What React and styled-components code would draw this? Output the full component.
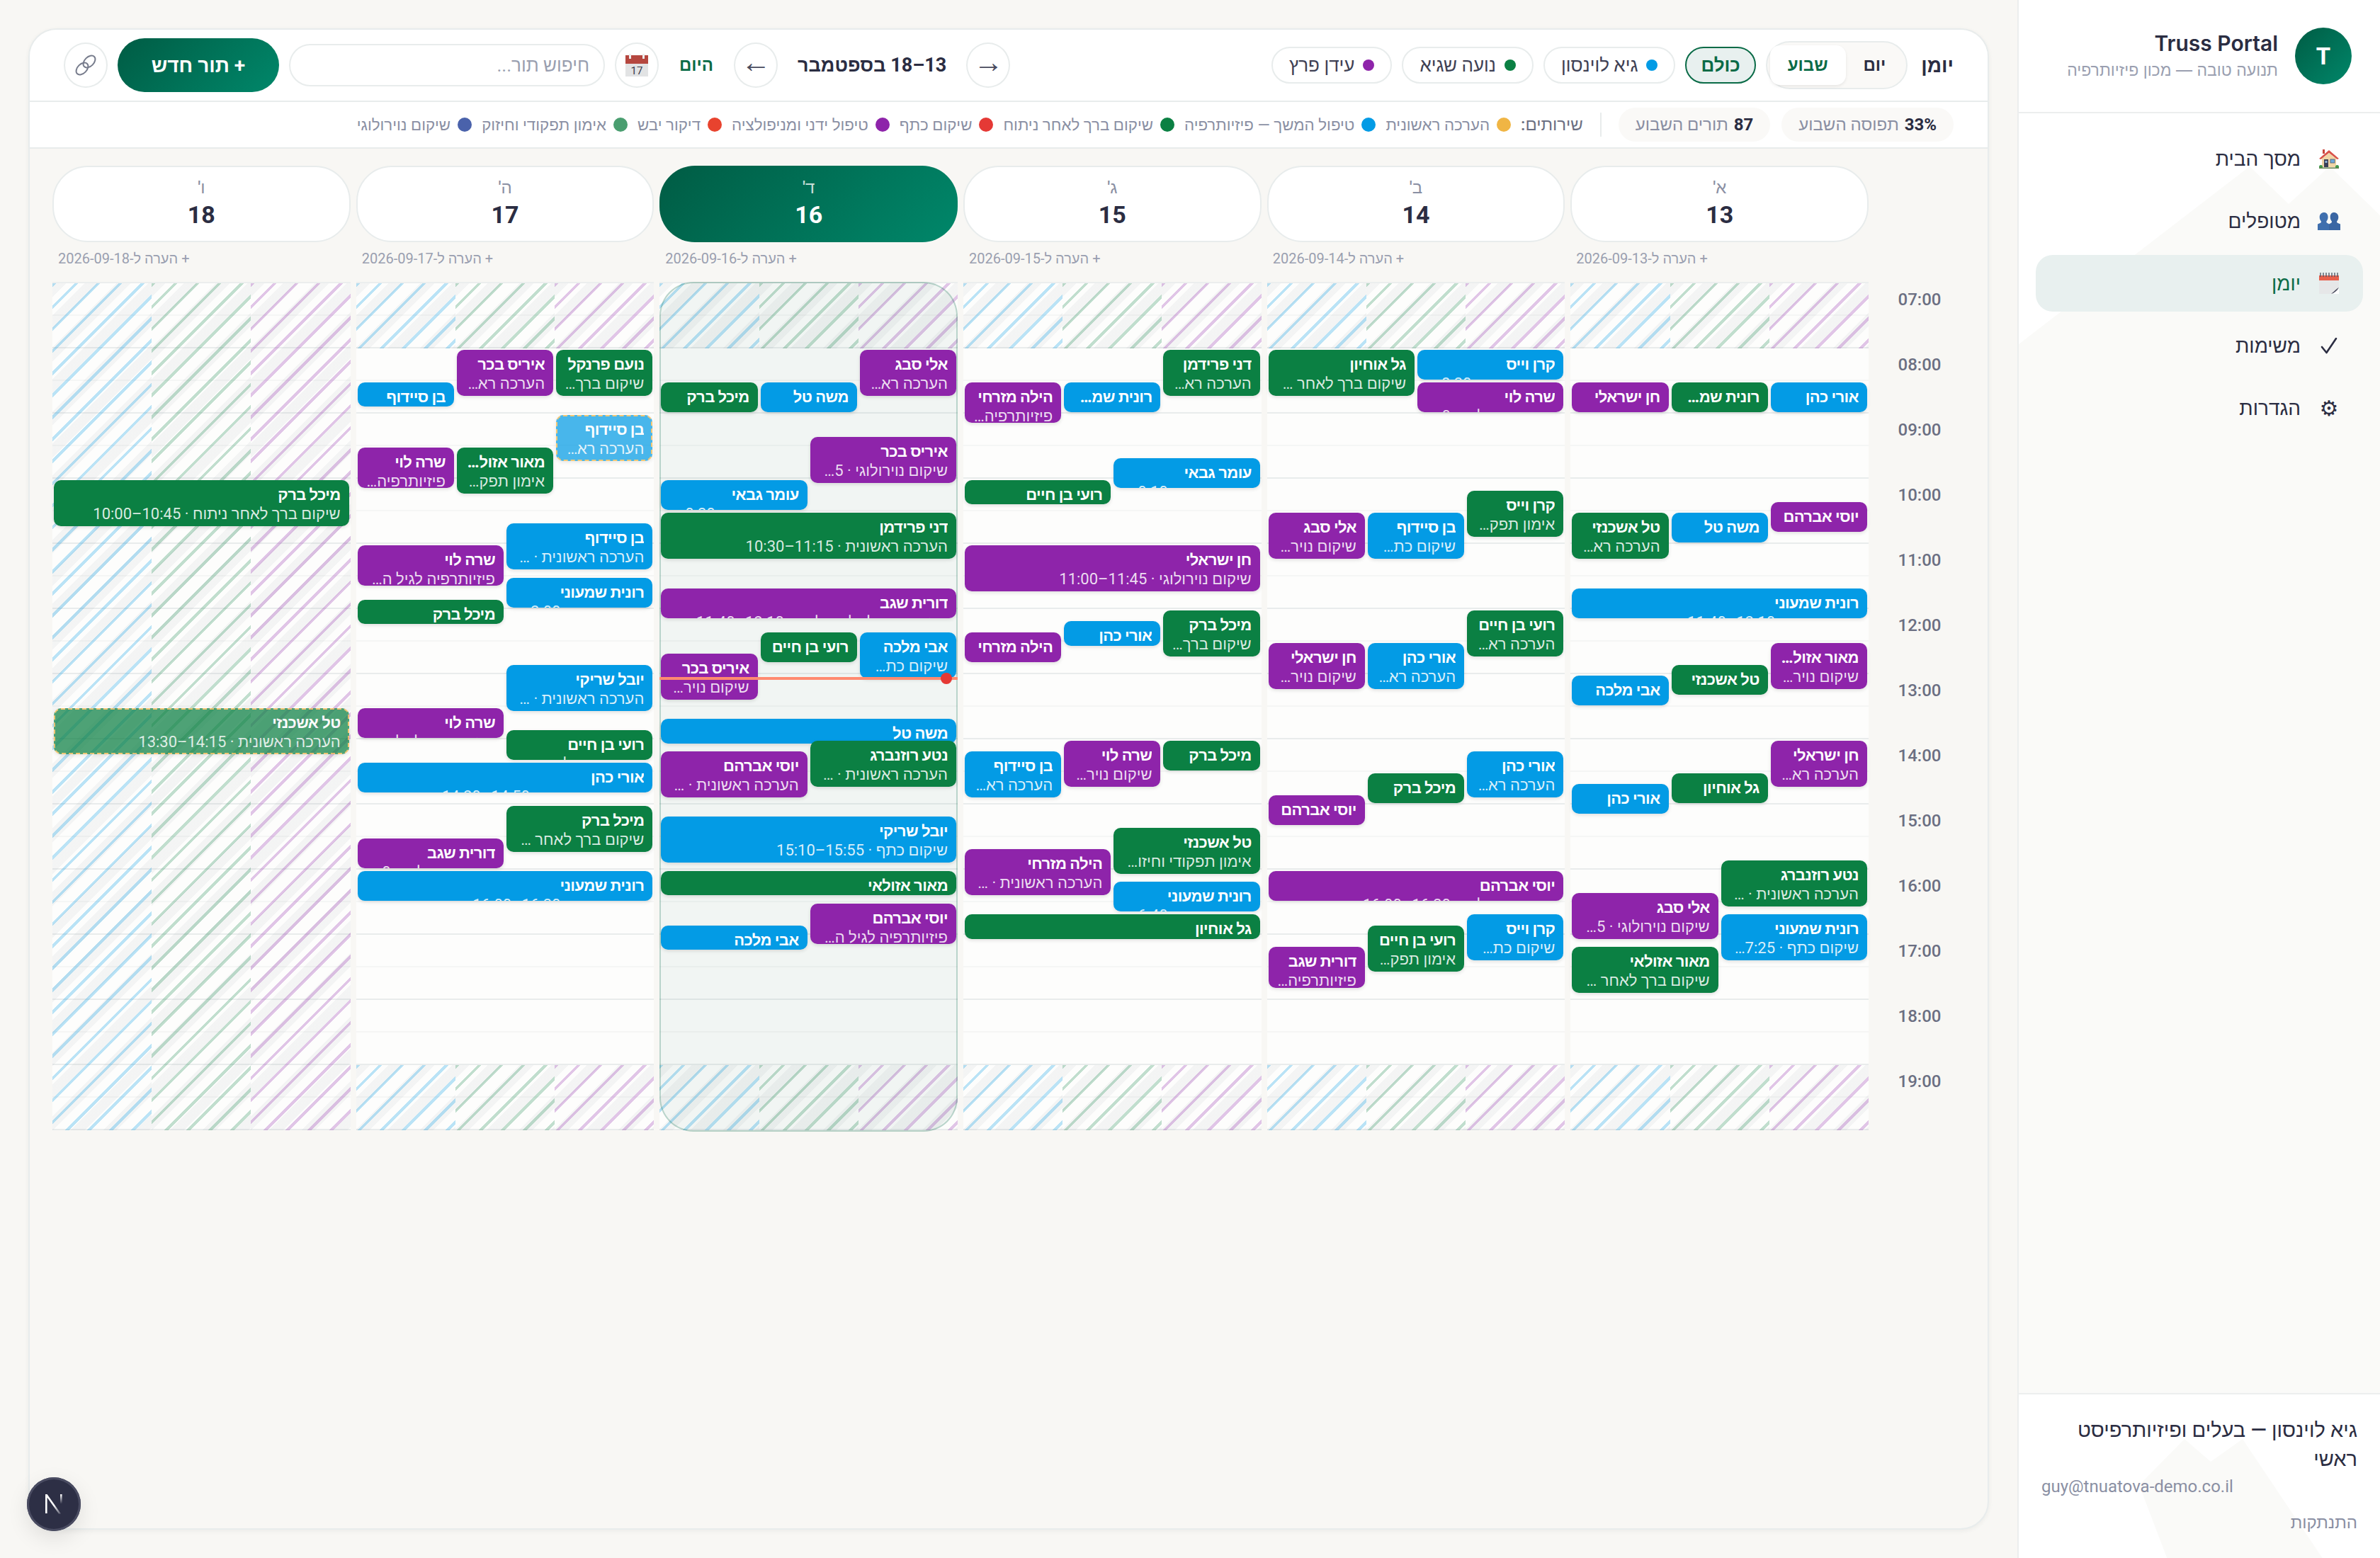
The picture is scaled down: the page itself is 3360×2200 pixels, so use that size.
import React from 'react'
import styled, { createGlobalStyle, css } from 'styled-components'

const GlobalStyle = createGlobalStyle`
  html, body {
    margin: 0;
    height: 100%;
    background: #f8f7f4;
  }
  body {
    font-family: 'Roboto', 'Noto Sans', 'Liberation Sans', sans-serif;
    color: #2b2d42;
  }
  * { box-sizing: border-box; }
`

const COLORS = { b: '#039be5', g: '#0b8043', p: '#8e24aa' }
const SLOT = 46
const PX_PER_MIN = (SLOT * 2) / 60
const FIRST_MIN = 420

const R = 'הערכה ראשונית'
const K = 'שיקום ברך לאחר ניתוח'
const N = 'שיקום נוירולוגי'
const S = 'שיקום כתף'
const F = 'פיזיותרפיה לגיל השלישי'
const A = 'אימון תפקודי וחיזוק'

// start minute, duration, lane, lanes, colour, name, service, pending
const ev = (start, dur, lane, lanes, c, name, service, pending) => ({ start, dur, lane, lanes, c, name, service, pending })

const DAYS = [
  {
    label: "א'", num: 13, date: '2026-09-13',
    events: [
      ev(510, 30, 0, 3, 'b', 'אורי כהן', R),
      ev(510, 30, 1, 3, 'g', 'רונית שמעוני', K),
      ev(510, 30, 2, 3, 'p', 'חן ישראלי', N),
      ev(620, 30, 0, 3, 'p', 'יוסי אברהם', N),
      ev(630, 30, 1, 3, 'b', 'משה טל', S),
      ev(630, 45, 2, 3, 'g', 'טל אשכנזי', R),
      ev(700, 30, 0, 1, 'b', 'רונית שמעוני', S),
      ev(750, 45, 0, 3, 'p', 'מאור אזולאי', N),
      ev(770, 30, 1, 3, 'g', 'טל אשכנזי', A),
      ev(780, 30, 2, 3, 'b', 'אבי מלכה', S),
      ev(840, 45, 0, 3, 'p', 'חן ישראלי', R),
      ev(870, 30, 1, 3, 'g', 'גל אוחיון', K),
      ev(880, 30, 2, 3, 'b', 'אורי כהן', R),
      ev(950, 45, 0, 2, 'g', 'נטע רוזנברג', R),
      ev(980, 45, 1, 2, 'p', 'אלי סבג', N),
      ev(1000, 45, 0, 2, 'b', 'רונית שמעוני', S),
      ev(1030, 45, 1, 2, 'g', 'מאור אזולאי', K),
    ],
  },
  {
    label: "ב'", num: 14, date: '2026-09-14',
    events: [
      ev(480, 30, 0, 2, 'b', 'קרן וייס', S),
      ev(480, 45, 1, 2, 'g', 'גל אוחיון', K),
      ev(510, 30, 0, 2, 'p', 'שרה לוי', N),
      ev(610, 45, 0, 3, 'g', 'קרן וייס', A),
      ev(630, 45, 1, 3, 'b', 'בן סיידוף', S),
      ev(630, 45, 2, 3, 'p', 'אלי סבג', N),
      ev(720, 45, 0, 3, 'g', 'רועי בן חיים', R),
      ev(750, 45, 1, 3, 'b', 'אורי כהן', R),
      ev(750, 45, 2, 3, 'p', 'חן ישראלי', N),
      ev(850, 45, 0, 3, 'b', 'אורי כהן', R),
      ev(870, 30, 1, 3, 'g', 'מיכל ברק', K),
      ev(890, 30, 2, 3, 'p', 'יוסי אברהם', N),
      ev(960, 30, 0, 1, 'p', 'יוסי אברהם', N),
      ev(1000, 45, 0, 3, 'b', 'קרן וייס', S),
      ev(1010, 45, 1, 3, 'g', 'רועי בן חיים', A),
      ev(1030, 40, 2, 3, 'p', 'דורית שגב', F),
    ],
  },
  {
    label: "ג'", num: 15, date: '2026-09-15',
    events: [
      ev(480, 45, 0, 3, 'g', 'דני פרידמן', R),
      ev(510, 30, 1, 3, 'b', 'רונית שמעוני', S),
      ev(510, 40, 2, 3, 'p', 'הילה מזרחי', F),
      ev(580, 30, 0, 2, 'b', 'עומר גבאי', S),
      ev(600, 25, 1, 2, 'g', 'רועי בן חיים', K),
      ev(660, 45, 0, 1, 'p', 'חן ישראלי', N),
      ev(720, 45, 0, 3, 'g', 'מיכל ברק', K),
      ev(730, 25, 1, 3, 'b', 'אורי כהן', R),
      ev(740, 30, 2, 3, 'p', 'הילה מזרחי', F),
      ev(840, 30, 0, 3, 'g', 'מיכל ברק', K),
      ev(840, 45, 1, 3, 'p', 'שרה לוי', N),
      ev(850, 45, 2, 3, 'b', 'בן סיידוף', R),
      ev(920, 45, 0, 2, 'g', 'טל אשכנזי', A),
      ev(940, 45, 1, 2, 'p', 'הילה מזרחי', R),
      ev(970, 30, 0, 2, 'b', 'רונית שמעוני', S),
      ev(1000, 25, 0, 1, 'g', 'גל אוחיון', K),
    ],
  },
  {
    label: "ד'", num: 16, date: '2026-09-16', today: true,
    events: [
      ev(480, 45, 0, 3, 'p', 'אלי סבג', R),
      ev(510, 30, 1, 3, 'b', 'משה טל', S),
      ev(510, 30, 2, 3, 'g', 'מיכל ברק', K),
      ev(560, 45, 0, 2, 'p', 'איריס בכר', N),
      ev(600, 30, 1, 2, 'b', 'עומר גבאי', S),
      ev(630, 45, 0, 1, 'g', 'דני פרידמן', R),
      ev(700, 30, 0, 1, 'p', 'דורית שגב', F),
      ev(740, 45, 0, 3, 'b', 'אבי מלכה', S),
      ev(740, 30, 1, 3, 'g', 'רועי בן חיים', K),
      ev(760, 45, 2, 3, 'p', 'איריס בכר', N),
      ev(820, 25, 0, 1, 'b', 'משה טל', S),
      ev(840, 45, 0, 2, 'g', 'נטע רוזנברג', R),
      ev(850, 45, 1, 2, 'p', 'יוסי אברהם', R),
      ev(910, 45, 0, 1, 'b', 'יובל שריקי', S),
      ev(960, 25, 0, 1, 'g', 'מאור אזולאי', K),
      ev(990, 40, 0, 2, 'p', 'יוסי אברהם', F),
      ev(1010, 25, 1, 2, 'b', 'אבי מלכה', S),
    ],
  },
  {
    label: "ה'", num: 17, date: '2026-09-17',
    events: [
      ev(480, 45, 0, 3, 'g', 'נועם פרנקל', K),
      ev(480, 45, 1, 3, 'p', 'איריס בכר', R),
      ev(510, 25, 2, 3, 'b', 'בן סיידוף', S),
      ev(540, 45, 0, 3, 'b', 'בן סיידוף', R, true),
      ev(570, 45, 1, 3, 'g', 'מאור אזולאי', A),
      ev(570, 40, 2, 3, 'p', 'שרה לוי', F),
      ev(640, 45, 0, 2, 'b', 'בן סיידוף', R),
      ev(660, 40, 1, 2, 'p', 'שרה לוי', F),
      ev(690, 30, 0, 2, 'b', 'רונית שמעוני', S),
      ev(710, 25, 1, 2, 'g', 'מיכל ברק', K),
      ev(770, 45, 0, 2, 'b', 'יובל שריקי', R),
      ev(810, 30, 1, 2, 'p', 'שרה לוי', F),
      ev(830, 30, 0, 2, 'g', 'רועי בן חיים', K),
      ev(860, 30, 0, 1, 'b', 'אורי כהן', R),
      ev(900, 45, 0, 2, 'g', 'מיכל ברק', K),
      ev(930, 30, 1, 2, 'p', 'דורית שגב', N),
      ev(960, 30, 0, 1, 'b', 'רונית שמעוני', S),
    ],
  },
  {
    label: "ו'", num: 18, date: '2026-09-18', closed: true,
    events: [
      ev(600, 45, 0, 1, 'g', 'מיכל ברק', K),
      ev(810, 45, 0, 1, 'g', 'טל אשכנזי', R, true),
    ],
  },
]

const HOURS = Array.from({ length: 13 }, (_, i) => `${String(i + 7).padStart(2, '0')}:00`)
const SLOTS = Array.from({ length: 26 }, (_, i) => i)

const LEGEND = [
  ['#f0b544', 'הערכה ראשונית'],
  ['#039be5', 'טיפול המשך — פיזיותרפיה'],
  ['#0b8043', 'שיקום ברך לאחר ניתוח'],
  ['#e53935', 'שיקום כתף'],
  ['#8e24aa', 'טיפול ידני ומניפולציה'],
  ['#e8432e', 'דיקור יבש'],
  ['#4a9e70', 'אימון תפקודי וחיזוק'],
  ['#4a62ab', 'שיקום נוירולוגי'],
]

const hhmm = (m) => `${String(Math.floor(m / 60)).padStart(2, '0')}:${String(m % 60).padStart(2, '0')}`

/* small drawn icons */

const HouseIcon = () => (
  <svg width="30" height="30" viewBox="0 0 30 30">
    <rect x="6" y="2" width="3" height="6" fill="#c8453c" />
    <rect x="5" y="13" width="20" height="14" fill="#f0d5a6" />
    <path d="M15 3 L29 15 L26.5 16 L15 7 L3.5 16 L1 15 Z" fill="#d9534a" />
    <path d="M15 7 L26 16 H4 Z" fill="#f0d5a6" />
    <rect x="8" y="16" width="6" height="11" fill="#3a3f55" />
    <rect x="9.5" y="18" width="3" height="3" fill="#8fb4d8" />
    <rect x="17" y="16" width="6" height="5" fill="#6fa8dc" stroke="#4a5a70" strokeWidth="0.8" />
    <circle cx="3.5" cy="26.5" r="2.5" fill="#3f9a4b" />
    <circle cx="26.5" cy="26.5" r="2.5" fill="#3f9a4b" />
    <rect x="1" y="27.5" width="28" height="1.5" fill="#5f7f4a" />
  </svg>
)

const PeopleIcon = () => (
  <svg width="32" height="26" viewBox="0 0 32 26">
    <path d="M9 1c3.4 0 5.6 2.7 5.6 6.4 0 2.7-1 4.8-2.3 6l.4 2.2 3.6 1.8v8.6H0v-8.6l4.6-1.8.4-2.2c-1.3-1.2-2.3-3.3-2.3-6C2.7 3.700 5.600 1 9 1z" fill="#3f6fae" />
    <path d="M23 1c3.400 0 6.300 2.700 6.300 6.400 0 2.700-1 4.800-2.300 6l.4 2.200 4.600 1.800v8.600H16v-8.600l3.600-1.800.4-2.200c-1.300-1.200-2.300-3.300-2.300-6C17.700 3.700 19.600 1 23 1z" fill="#3a66a3" />
  </svg>
)

const PlannerIcon = () => (
  <svg width="28" height="30" viewBox="0 0 28 30">
    <rect x="0" y="3" width="28" height="27" fill="#e6e7e8" />
    <rect x="0" y="4" width="28" height="7" fill="#e8604c" />
    {[2, 6, 10, 14, 18, 22, 26].map((x) => (
      <rect key={x} x={x - 0.7} y="0" width="1.4" height="6" fill="#555a68" />
    ))}
    <path d="M28 21 L28 30 L17 30 C21 29 25 26 28 21Z" fill="#fff" />
    <path d="M28 21 C25 26 21 29 17 30 C22 26 24 23 28 21Z" fill="#4a4c5e" />
  </svg>
)

const CheckIcon = () => (
  <svg width="26" height="26" viewBox="0 0 26 26" fill="none">
    <path d="M3 15 L9.500 23 L23 3" stroke="#2b2d42" strokeWidth="2.600" strokeLinecap="round" strokeLinejoin="round" />
  </svg>
)

const CalendarIcon = () => (
  <svg width="32" height="32" viewBox="0 0 32 32">
    <rect x="0" y="2" width="32" height="30" fill="#e2e3e4" />
    <rect x="0" y="2" width="32" height="12" fill="#b5473f" />
    <rect x="5" y="0" width="3" height="7" fill="#eee" />
    <rect x="24" y="0" width="3" height="7" fill="#eee" />
    <text x="16" y="29" textAnchor="middle" fontSize="15" fontFamily="Roboto, sans-serif" fill="#3a3c4c">17</text>
  </svg>
)

const LinkIcon = () => (
  <svg width="32" height="32" viewBox="0 0 32 32" fill="none">
    <ellipse cx="11" cy="21" rx="6.500" ry="10" transform="rotate(45 11 21)" stroke="#777c8c" strokeWidth="2" />
    <ellipse cx="21" cy="11" rx="6.500" ry="10" transform="rotate(45 21 11)" stroke="#777c8c" strokeWidth="2" />
  </svg>
)

const NAV = [
  [<HouseIcon key="i" />, 'מסך הבית'],
  [<PeopleIcon key="i" />, 'מטופלים'],
  [<PlannerIcon key="i" />, 'יומן', true],
  [<CheckIcon key="i" />, 'משימות'],
  ['⚙', 'הגדרות'],
]

function Event({ e }) {
  const top = (e.start - FIRST_MIN) * PX_PER_MIN + 2
  const height = e.dur * PX_PER_MIN - 4
  const share = 100 / e.lanes
  return (
    <EventCard
      $bg={COLORS[e.c]}
      $pending={e.pending}
      style={{
        top,
        height,
        right: `calc(${share * e.lane}% + 2px)`,
        width: `calc(${share}% - 4px)`,
      }}
    >
      <EventName>{e.name}</EventName>
      <EventSub>{`${e.service} · \u2066${hhmm(e.start)}–${hhmm(e.start + e.dur)}\u2069`}</EventSub>
    </EventCard>
  )
}

function Hatch({ $full, $bottom }) {
  return (
    <HatchZone $full={$full} $bottom={$bottom}>
      <HatchStrip $line="rgba(3,155,229,.27)" />
      <HatchStrip $line="rgba(11,128,67,.25)" />
      <HatchStrip $line="rgba(142,36,170,.26)" />
    </HatchZone>
  )
}

export default function App() {
  return (
    <Page dir="rtl">
      <GlobalStyle />
      <Sidebar>
        <Brand>
          <BrandMark>T</BrandMark>
          <div>
            <BrandName>Truss Portal</BrandName>
            <BrandSub>תנועה טובה — מכון פיזיותרפיה</BrandSub>
          </div>
        </Brand>
        <Nav>
          {NAV.map(([icon, text, active]) => (
            <NavItem key={text} $active={active}>
              <NavIcon>{icon}</NavIcon>
              {text}
            </NavItem>
          ))}
        </Nav>
        <SideFooter>
          <UserName>גיא לוינסון — בעלים ופיזיותרפיסט ראשי</UserName>
          <UserMail>guy@tnuatova-demo.co.il</UserMail>
          <Logout>התנתקות</Logout>
        </SideFooter>
      </Sidebar>

      <Main>
        <Card>
          <Toolbar>
            <ToolGroup>
              <Title>יומן</Title>
              <Toggle>
                <ToggleItem>יום</ToggleItem>
                <ToggleItem $active>שבוע</ToggleItem>
              </Toggle>
              <Chip $active>כולם</Chip>
              <Chip><Dot $c={COLORS.b} $size={16} />גיא לוינסון</Chip>
              <Chip><Dot $c={COLORS.g} $size={16} />נועה שגיא</Chip>
              <Chip><Dot $c={COLORS.p} $size={16} />עידן פרץ</Chip>
            </ToolGroup>
            <ToolGroup>
              <RoundButton><Arrow>→</Arrow></RoundButton>
              <DateRange>13–18 בספטמבר</DateRange>
              <RoundButton><Arrow>←</Arrow></RoundButton>
              <TodayLink>היום</TodayLink>
              <RoundButton><CalendarIcon /></RoundButton>
              <Search>חיפוש תור...</Search>
              <NewButton>+ תור חדש</NewButton>
              <RoundButton><LinkIcon /></RoundButton>
            </ToolGroup>
          </Toolbar>

          <InfoBar>
            <Stat><b>33%</b> תפוסה השבוע</Stat>
            <Stat><b>87</b> תורים השבוע</Stat>
            <Divider />
            <LegendList>
              <LegendTitle>שירותים:</LegendTitle>
              {LEGEND.map(([c, text]) => (
                <LegendItem key={text}><Dot $c={c} $size={20} />{text}</LegendItem>
              ))}
            </LegendList>
          </InfoBar>

          <Week>
            <span />
            {DAYS.map((d) => (
              <DayHead key={d.num} $today={d.today}>
                <DayLabel $today={d.today}>{d.label}</DayLabel>
                <DayNum>{d.num}</DayNum>
              </DayHead>
            ))}
            <span />
            {DAYS.map((d) => (
              <AddNote key={d.num}>+ הערה ל-{d.date}</AddNote>
            ))}
            <TimeColumn>
              {HOURS.map((h) => <TimeLabel key={h}>{h}</TimeLabel>)}
            </TimeColumn>
            {DAYS.map((d) => (
              <DayBody key={d.num}>
                {SLOTS.map((i) => <Slot key={i} $hour={i % 2 === 1} />)}
                <Hatch $full={d.closed} />
                {!d.closed && <Hatch $bottom />}
                {d.today && <TodayTint />}
                {d.events.map((e) => <Event key={e.start + e.name} e={e} />)}
                {d.today && <NowLine><NowDot /></NowLine>}
              </DayBody>
            ))}
          </Week>
        </Card>
      </Main>

      <DevBadge>
        <svg width="30" height="30" viewBox="0 0 30 30" fill="none">
          <defs>
            <linearGradient id="nDiag" x1="0" y1="0" x2="1" y2="1">
              <stop offset="0.55" stopColor="#fff" />
              <stop offset="1" stopColor="#fff" stopOpacity="0.2" />
            </linearGradient>
            <linearGradient id="nBar" x1="0" y1="0" x2="0" y2="1">
              <stop offset="0" stopColor="#fff" />
              <stop offset="0.8" stopColor="#fff" stopOpacity="0" />
            </linearGradient>
          </defs>
          <path d="M3 1h2.600L25 28.500h-3L5.600 5.500V28H3z" fill="url(#nDiag)" />
          <rect x="24" y="1" width="2.600" height="17" fill="url(#nBar)" />
        </svg>
      </DevBadge>
    </Page>
  )
}

const Page = styled.div`
  display: flex;
  height: 2200px;
  overflow: hidden;
  position: relative;
`

/* Sidebar */

const Sidebar = styled.aside`
  position: relative;
  width: 512px;
  flex: none;
  display: flex;
  flex-direction: column;
  background: #fff;
  border-left: 2px solid #eceeee;
  font-family: 'Inter', 'Liberation Sans', sans-serif;
  &::before {
    content: '';
    position: absolute;
    inset: 0;
    background: #fafaf8;
    clip-path: polygon(0 486px, 326px 235px, 381px 288px, 439px 235px, 512px 306px, 512px 1967px, 0 1967px);
  }
`

const Brand = styled.div`
  position: relative;
  height: 160px;
  display: flex;
  align-items: center;
  gap: 24px;
  padding: 0 40px;
  border-bottom: 2px solid #eceeee;
`

const BrandMark = styled.div`
  width: 80px;
  height: 80px;
  border-radius: 50%;
  display: flex;
  align-items: center;
  justify-content: center;
  color: #fff;
  font-size: 32px;
  font-weight: 700;
  background: linear-gradient(135deg, #005c44, #00876a);
`

const BrandName = styled.div`
  font-size: 30px;
  font-weight: 600;
  line-height: 40px;
`

const BrandSub = styled.div`
  font-size: 23px;
  line-height: 36px;
  color: #9a9fb0;
`

const Nav = styled.nav`
  position: relative;
  flex: 1;
  display: flex;
  flex-direction: column;
  gap: 8px;
  padding: 24px;
`

const NavItem = styled.div`
  height: 80px;
  border-radius: 24px;
  display: flex;
  align-items: center;
  gap: 24px;
  padding: 0 32px;
  font-size: 28px;
  font-weight: 500;
  color: ${(p) => (p.$active ? '#0a6b47' : '#2b2d42')};
  background: ${(p) => (p.$active ? '#e8f0ef' : 'transparent')};
`

const NavIcon = styled.span`
  width: 32px;
  display: flex;
  align-items: center;
  justify-content: center;
  font-family: 'DejaVu Sans', sans-serif;
  font-size: 30px;
`

const SideFooter = styled.div`
  position: relative;
  height: 233px;
  padding: 30px 32px 0;
  background: #fff;
  border-top: 2px solid #eceeee;
  font-family: 'Roboto', sans-serif;
  &::before {
    content: '';
    position: absolute;
    inset: 0;
    background: #fafaf8;
    clip-path: polygon(170px 128px, 234px 63px, 271px 95px, 316px 63px, 430px 233px, 210px 233px);
  }
`

const UserName = styled.div`
  position: relative;
  font-size: 29px;
  font-weight: 500;
  line-height: 41px;
`

const UserMail = styled.div`
  position: relative;
  font-size: 24px;
  line-height: 36px;
  color: #8a8fa3;
  direction: ltr;
  text-align: left;
`

const Logout = styled.div`
  position: relative;
  margin-top: 15px;
  font-size: 24px;
  line-height: 36px;
  color: #8a8fa3;
`

/* Main card */

const Main = styled.main`
  flex: 1;
  min-width: 0;
  padding: 40px;
`

const Card = styled.section`
  height: 2120px;
  border-radius: 40px;
  border: 2px solid #e8ecec;
  box-shadow: 0 2px 6px rgba(30, 50, 50, 0.06);
  overflow: hidden;
  background: #f8f7f4;
`

const Toolbar = styled.div`
  height: 102px;
  display: flex;
  align-items: center;
  justify-content: space-between;
  padding: 0 48px;
  background: #fff;
  border-bottom: 2px solid #e8ecec;
`

const ToolGroup = styled.div`
  display: flex;
  align-items: center;
  gap: 14px;
`

const Title = styled.h1`
  margin: 0 0 0 5px;
  font-size: 28px;
  font-weight: 700;
`

const Toggle = styled.div`
  display: flex;
  align-items: center;
  height: 68px;
  padding: 4px;
  border-radius: 34px;
  border: 2px solid #e8ecec;
  background: #faf9f7;
`

const ToggleItem = styled.div`
  height: 56px;
  display: flex;
  align-items: center;
  padding: 0 25px;
  border-radius: 14px;
  font-size: 24px;
  font-weight: 600;
  color: ${(p) => (p.$active ? '#0a6b47' : '#2b2d42')};
  background: ${(p) => (p.$active ? '#fff' : 'transparent')};
  box-shadow: ${(p) => (p.$active ? '0 2px 4px rgba(0,0,0,.08)' : 'none')};
`

const Chip = styled.div`
  height: 52px;
  display: flex;
  align-items: center;
  gap: 12px;
  padding: 0 23px;
  border-radius: 26px;
  font-size: 26px;
  font-weight: 500;
  color: #3f4154;
  border: 2px solid #e8ecec;
  background: #fff;
  ${(p) => p.$active && css`
    padding: 0 20px;
    color: #0a6b47;
    font-weight: 600;
    border-color: #0a6b47;
    background: #e8f0ef;
  `}
`

const Dot = styled.span`
  flex: none;
  width: ${(p) => p.$size}px;
  height: ${(p) => p.$size}px;
  border-radius: 50%;
  background: ${(p) => p.$c};
`

const RoundButton = styled.div`
  width: 62px;
  height: 64px;
  flex: none;
  border-radius: 50%;
  border: 2px solid #e8ecec;
  display: flex;
  align-items: center;
  justify-content: center;
  background: #fff;
`

const Arrow = styled.span`
  margin-top: -9px;
  font-family: 'Liberation Sans', sans-serif;
  font-size: 42px;
  line-height: 1;
  color: #4a4c5e;
`

const DateRange = styled.div`
  padding: 0 14px;
  font-size: 27px;
  font-weight: 700;
`

const TodayLink = styled.div`
  padding: 0 15px;
  font-size: 24px;
  font-weight: 700;
  color: #0a6b47;
`

const Search = styled.div`
  width: 446px;
  height: 60px;
  display: flex;
  align-items: center;
  padding: 0 20px;
  border-radius: 30px;
  border: 2px solid #e8ecec;
  font-size: 26px;
  color: #9a9fb0;
  background: #fff;
`

const NewButton = styled.div`
  width: 228px;
  height: 76px;
  display: flex;
  align-items: center;
  justify-content: center;
  border-radius: 38px;
  font-size: 28px;
  font-weight: 600;
  color: #fff;
  background: linear-gradient(135deg, #005c44, #00876a);
`

const InfoBar = styled.div`
  height: 66px;
  display: flex;
  align-items: center;
  gap: 16px;
  padding: 0 48px;
  background: #fff;
  border-bottom: 2px solid #e8ecec;
`

const Stat = styled.div`
  height: 48px;
  display: flex;
  align-items: center;
  gap: 8px;
  padding: 0 24px;
  border-radius: 24px;
  font-size: 24px;
  color: #8a8fa3;
  background: #faf9f7;
  b {
    color: #2b2d42;
    font-weight: 700;
  }
`

const Divider = styled.span`
  width: 2px;
  height: 34px;
  margin: 0 8px;
  background: #e8ecec;
`

const LegendList = styled.div`
  display: flex;
  align-items: center;
  gap: 14px;
`

const LegendTitle = styled.span`
  font-size: 24px;
  font-weight: 500;
  color: #6b6f82;
`

const LegendItem = styled.span`
  display: flex;
  align-items: center;
  gap: 10px;
  font-size: 22.3px;
  color: #8a8fa3;
`

/* Week grid */

const Week = styled.div`
  display: grid;
  grid-template-columns: 128px repeat(6, 1fr);
  column-gap: 8px;
  padding: 24px 32px;
`

const DayHead = styled.div`
  height: 108px;
  padding-bottom: 6px;
  border-radius: 50px;
  display: flex;
  flex-direction: column;
  align-items: center;
  justify-content: center;
  background: #fff;
  border: 2px solid #e8ecec;
  ${(p) => p.$today && css`
    border: none;
    color: #fff;
    background: linear-gradient(135deg, #005c44, #00876a);
  `}
`

const DayLabel = styled.div`
  font-size: 24px;
  line-height: 36px;
  font-weight: 500;
  color: ${(p) => (p.$today ? 'rgba(255,255,255,.8)' : '#8a8fa3')};
`

const DayNum = styled.div`
  font-size: 34px;
  line-height: 40px;
  font-weight: 700;
`

const AddNote = styled.div`
  padding: 8px 8px 20px;
  font-size: 20px;
  line-height: 30px;
  text-align: left;
  color: #9a9fb0;
`

const TimeColumn = styled.div`
  display: flex;
  flex-direction: column;
`

const TimeLabel = styled.div`
  height: ${SLOT * 2}px;
  padding-top: 7px;
  text-align: center;
  font-size: 24px;
  line-height: 32px;
  font-weight: 500;
  color: #6b6f82;
`

const DayBody = styled.div`
  position: relative;
  background: #fdfdfc;
  border-top: 2px solid #eceeee;
  margin-top: -2px;
`

const Slot = styled.div`
  height: ${SLOT}px;
  border-bottom: 2px solid ${(p) => (p.$hour ? '#e9ecec' : '#f5f6f5')};
`

const HatchZone = styled.div`
  position: absolute;
  left: 0;
  right: 0;
  display: flex;
  direction: ltr;
  top: ${(p) => (p.$bottom ? 'auto' : 0)};
  bottom: ${(p) => (p.$bottom || p.$full ? 0 : 'auto')};
  height: ${(p) => (p.$full ? 'auto' : `${SLOT * 2}px`)};
`

const HatchStrip = styled.div`
  flex: 1;
  background-image:
    repeating-linear-gradient(135deg, ${(p) => p.$line} 0 4px, transparent 4px 22px),
    repeating-linear-gradient(135deg, rgba(120, 130, 140, 0.07) 0 14px, transparent 14px 32px);
`

const TodayTint = styled.div`
  position: absolute;
  inset: -2px 0 -2px 0;
  border-radius: 48px;
  border: 2px solid rgba(10, 107, 71, 0.24);
  background: rgba(10, 107, 71, 0.05);
`

const EventCard = styled.div`
  position: absolute;
  overflow: hidden;
  padding: 7px 12px;
  border-radius: 10px;
  color: #fff;
  background: ${(p) => p.$bg};
  box-shadow: 0 2px 5px rgba(0, 0, 0, 0.12);
  ${(p) => p.$pending && css`
    opacity: 0.72;
    padding: 5px 10px;
    border: 2px dashed #f0b544;
  `}
`

const EventName = styled.div`
  font-size: 22px;
  line-height: 28px;
  font-weight: 800;
  letter-spacing: -0.6px;
  white-space: nowrap;
  overflow: hidden;
  text-overflow: ellipsis;
`

const EventSub = styled.div`
  font-size: 22px;
  line-height: 26px;
  white-space: nowrap;
  overflow: hidden;
  text-overflow: ellipsis;
  color: rgba(255, 255, 255, 0.85);
`

const NowLine = styled.div`
  position: absolute;
  left: 0;
  right: 0;
  top: 556px;
  height: 4px;
  background: #ff8a70;
`

const NowDot = styled.span`
  position: absolute;
  right: 8px;
  top: -6px;
  width: 16px;
  height: 16px;
  border-radius: 50%;
  background: #e53935;
`

const DevBadge = styled.div`
  position: absolute;
  left: 38px;
  bottom: 38px;
  width: 76px;
  height: 76px;
  display: flex;
  align-items: center;
  justify-content: center;
  border-radius: 50%;
  background: #2d2f45;
  box-shadow: inset 0 0 0 3px #4a4c62, 0 10px 30px rgba(0, 0, 0, 0.1);
`
